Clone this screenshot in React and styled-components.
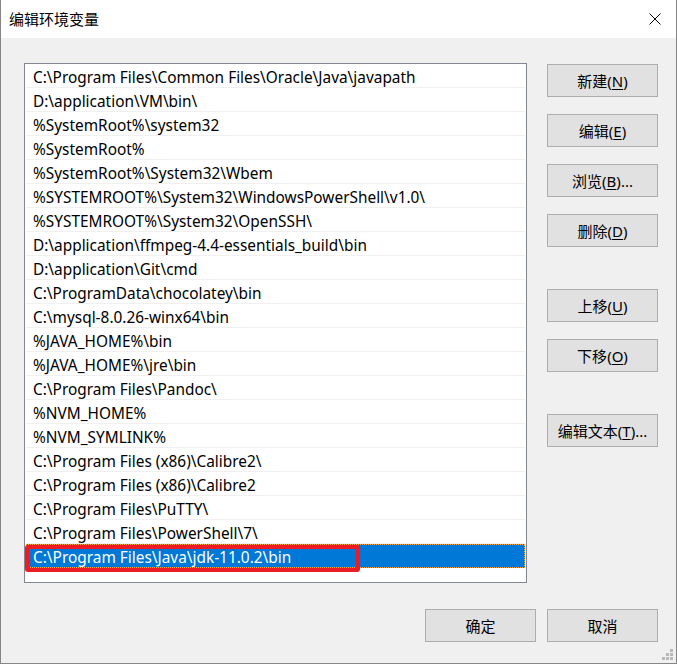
import React from "react";
import styled, { createGlobalStyle } from "styled-components";

const GlobalStyle = createGlobalStyle`
  html, body {
    margin: 0;
    padding: 0;
    background: #f0f0f0;
  }
  * {
    box-sizing: border-box;
  }
`;

const uiFont = `"Noto Sans", "Noto Sans CJK SC", sans-serif`;

const paths = [
  "C:\\Program Files\\Common Files\\Oracle\\Java\\javapath",
  "D:\\application\\VM\\bin\\",
  "%SystemRoot%\\system32",
  "%SystemRoot%",
  "%SystemRoot%\\System32\\Wbem",
  "%SYSTEMROOT%\\System32\\WindowsPowerShell\\v1.0\\",
  "%SYSTEMROOT%\\System32\\OpenSSH\\",
  "D:\\application\\ffmpeg-4.4-essentials_build\\bin",
  "D:\\application\\Git\\cmd",
  "C:\\ProgramData\\chocolatey\\bin",
  "C:\\mysql-8.0.26-winx64\\bin",
  "%JAVA_HOME%\\bin",
  "%JAVA_HOME%\\jre\\bin",
  "C:\\Program Files\\Pandoc\\",
  "%NVM_HOME%",
  "%NVM_SYMLINK%",
  "C:\\Program Files (x86)\\Calibre2\\",
  "C:\\Program Files (x86)\\Calibre2",
  "C:\\Program Files\\PuTTY\\",
  "C:\\Program Files\\PowerShell\\7\\",
  "C:\\Program Files\\Java\\jdk-11.0.2\\bin",
];

const Window = styled.div`
  width: 677px;
  height: 664px;
  display: flex;
  flex-direction: column;
  border: 1px solid #858585;
  border-top: none;
  background: #f0f0f0;
  font-family: ${uiFont};
  color: #000;
`;

const TitleBar = styled.div`
  height: 38px;
  flex-shrink: 0;
  background: #fff;
  display: flex;
  align-items: center;
  justify-content: space-between;
  padding: 0 15px 1px 8px;
`;

const Title = styled.span`
  font-size: 15px;
`;

const CloseIcon = styled.svg`
  display: block;
`;

const Body = styled.div`
  flex: 1;
  display: flex;
  flex-direction: column;
  padding: 25px 18px 0 23px;
`;

const Main = styled.div`
  display: flex;
  gap: 20px;
`;

const List = styled.div`
  position: relative;
  width: 503px;
  height: 520px;
  border: 1px solid #828790;
  background: #fff;
  padding: 0 1px;
`;

const Row = styled.div`
  height: 24px;
  line-height: 23px;
  padding: 2px 0 0 7px;
  font-size: 15.4px;
  white-space: nowrap;
  border-bottom: 1px solid ${(p) => (p.$selected ? "transparent" : "#f0f0f0")};
  background: ${(p) => (p.$selected ? "#0078d7" : "transparent")};
  color: ${(p) => (p.$selected ? "#fff" : "#000")};
  outline: ${(p) => (p.$selected ? "1px dotted #f7a84a" : "none")};
  outline-offset: -1px;
`;

const Mark = styled.div`
  position: absolute;
  left: 0;
  top: 481px;
  width: 335px;
  height: 27px;
  border: 4px solid #ed1c24;
  border-radius: 3px;
  pointer-events: none;
`;

const Side = styled.div`
  display: flex;
  flex-direction: column;
  gap: 17px;
  padding-top: 1px;
`;

const Spacer = styled.div`
  height: ${(p) => p.$h}px;
`;

const Button = styled.button`
  width: 111px;
  height: 33px;
  padding: 0;
  border: 1px solid #adadad;
  background: #e1e1e1;
  font-family: ${uiFont};
  font-size: 15px;
  color: #000;
  cursor: default;
  u {
    text-decoration-thickness: 1px;
    text-underline-offset: 2px;
  }
`;

const Footer = styled.div`
  display: flex;
  justify-content: flex-end;
  gap: 11px;
  margin-top: 26px;
`;

const Grip = styled.svg`
  position: absolute;
  right: 3px;
  bottom: 3px;
`;

const Frame = styled.div`
  position: relative;
  width: 677px;
  height: 664px;
`;

function Label({ text, hotkey, dots }) {
  return (
    <>
      {text}(<u>{hotkey}</u>){dots ? "..." : ""}
    </>
  );
}

export default function App() {
  const last = paths.length - 1;
  return (
    <Frame>
      <GlobalStyle />
      <Window>
        <TitleBar>
          <Title>编辑环境变量</Title>
          <CloseIcon width="12" height="12" viewBox="0 0 12 12">
            <path d="M0.5 0.5 L11.5 11.5 M11.5 0.5 L0.5 11.5" stroke="#000" strokeWidth="1" />
          </CloseIcon>
        </TitleBar>
        <Body>
          <Main>
            <List>
              {paths.map((p, i) => (
                <Row key={i} $selected={i === last}>
                  {p}
                </Row>
              ))}
              <Mark />
            </List>
            <Side>
              <Button><Label text="新建" hotkey="N" /></Button>
              <Button><Label text="编辑" hotkey="E" /></Button>
              <Button><Label text="浏览" hotkey="B" dots /></Button>
              <Button><Label text="删除" hotkey="D" /></Button>
              <Spacer $h={8} />
              <Button><Label text="上移" hotkey="U" /></Button>
              <Button><Label text="下移" hotkey="O" /></Button>
              <Spacer $h={8} />
              <Button><Label text="编辑文本" hotkey="T" dots /></Button>
            </Side>
          </Main>
          <Footer>
            <Button>确定</Button>
            <Button>取消</Button>
          </Footer>
        </Body>
      </Window>
      <Grip width="12" height="12" viewBox="0 0 12 12">
        <g fill="#b8b8b8">
          <rect x="8" y="0" width="3" height="3" />
          <rect x="4" y="4" width="3" height="3" />
          <rect x="8" y="4" width="3" height="3" />
          <rect x="0" y="8" width="3" height="3" />
          <rect x="4" y="8" width="3" height="3" />
          <rect x="8" y="8" width="3" height="3" />
        </g>
      </Grip>
    </Frame>
  );
}
